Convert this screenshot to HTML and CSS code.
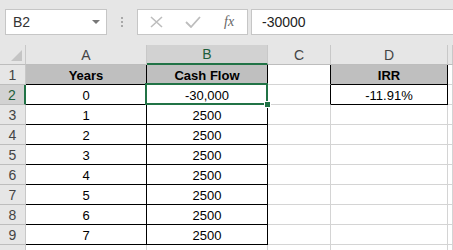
FILE: index.html
```html
<!DOCTYPE html>
<html lang="en">
<head>
    <meta charset="UTF-8">
    <title>IRR sheet</title>
    <link rel="stylesheet" href="styles.css">
</head>
<body>
    <div class="formula-bar">
        <div class="name-box">
            <span>B2</span>
            <span class="drop"></span>
        </div>
        <div class="dots"><i></i><i></i><i></i></div>
        <div class="fx-box">
            <svg class="ico" width="13" height="12" viewBox="0 0 13 12"><path d="M1 1 L12 11 M12 1 L1 11" stroke="#bdbdbd" stroke-width="1.6" fill="none"/></svg>
            <svg class="ico" width="16" height="12" viewBox="0 0 16 12"><path d="M1 6 L6 11 L15 1" stroke="#bdbdbd" stroke-width="1.8" fill="none"/></svg>
            <span class="fx">fx</span>
        </div>
        <div class="input">-30000</div>
    </div>

    <div class="sheet-wrap">
    <div class="sheet">
        <div class="corner"></div>
        <div class="colhead">A</div>
        <div class="colhead sel">B</div>
        <div class="colhead">C</div>
        <div class="colhead">D</div>
        <div class="colhead"></div>

        <div class="rowhead">1</div>
        <div class="cell tbl head">Years</div>
        <div class="cell tbl head">Cash Flow</div>
        <div class="cell edge"></div>
        <div class="cell tbl head">IRR</div>
        <div class="cell"></div>

        <div class="rowhead sel">2</div>
        <div class="cell tbl">0</div>
        <div class="cell tbl active">-30,000<span class="pick"><b></b></span></div>
        <div class="cell edge"></div>
        <div class="cell tbl">-11.91%</div>
        <div class="cell"></div>

        <div class="rowhead">3</div>
        <div class="cell tbl">1</div>
        <div class="cell tbl">2500</div>
        <div class="cell"></div><div class="cell"></div><div class="cell"></div>

        <div class="rowhead">4</div>
        <div class="cell tbl">2</div>
        <div class="cell tbl">2500</div>
        <div class="cell"></div><div class="cell"></div><div class="cell"></div>

        <div class="rowhead">5</div>
        <div class="cell tbl">3</div>
        <div class="cell tbl">2500</div>
        <div class="cell"></div><div class="cell"></div><div class="cell"></div>

        <div class="rowhead">6</div>
        <div class="cell tbl">4</div>
        <div class="cell tbl">2500</div>
        <div class="cell"></div><div class="cell"></div><div class="cell"></div>

        <div class="rowhead">7</div>
        <div class="cell tbl">5</div>
        <div class="cell tbl">2500</div>
        <div class="cell"></div><div class="cell"></div><div class="cell"></div>

        <div class="rowhead">8</div>
        <div class="cell tbl">6</div>
        <div class="cell tbl">2500</div>
        <div class="cell"></div><div class="cell"></div><div class="cell"></div>

        <div class="rowhead">9</div>
        <div class="cell tbl">7</div>
        <div class="cell tbl">2500</div>
        <div class="cell"></div><div class="cell"></div><div class="cell"></div>

        <div class="rowhead"></div>
        <div class="cell"></div><div class="cell"></div>
        <div class="cell"></div><div class="cell"></div><div class="cell"></div>
    </div>
    </div>
</body>
</html>
```

FILE: styles.css
```css
body {
    margin: 0;
    background-color: #e6e6e6;
    font-family: "Liberation Sans", Arial, sans-serif;
    overflow: hidden;
}

/* formula bar */

.formula-bar {
    display: flex;
    align-items: flex-start;
    height: 45px;
    padding: 9px 0 0 5px;
    box-sizing: border-box;
}

.name-box {
    width: 102px;
    height: 26px;
    box-sizing: border-box;
    background: #fff;
    border: 1px solid #c6c6c6;
    display: flex;
    align-items: center;
    justify-content: space-between;
    padding: 0 6px 0 7px;
    font-size: 14px;
    color: #333;
}

.drop {
    width: 0;
    height: 0;
    border-left: 4px solid transparent;
    border-right: 4px solid transparent;
    border-top: 4px solid #777;
}

.dots {
    width: 30px;
    height: 26px;
    display: flex;
    flex-direction: column;
    align-items: center;
    justify-content: center;
    gap: 2px;
}

.dots i {
    width: 2px;
    height: 2px;
    background: #a8a8a8;
}

.fx-box {
    width: 111px;
    height: 26px;
    box-sizing: border-box;
    background: #fff;
    border: 1px solid #c6c6c6;
    display: flex;
    align-items: center;
    padding-left: 12px;
    gap: 22px;
}

.fx {
    font-family: "Liberation Serif", serif;
    font-style: italic;
    font-size: 14px;
    color: #666;
    margin-left: 1px;
}

.input {
    flex: 1;
    height: 26px;
    box-sizing: border-box;
    margin-left: 3px;
    margin-right: -2px;
    background: #fff;
    border: 1px solid #c6c6c6;
    padding-left: 10px;
    line-height: 24px;
    font-size: 14px;
    color: #222;
}

/* sheet */

.sheet-wrap {
    height: 205px;
    overflow: hidden;
}

.sheet {
    display: grid;
    grid-template-columns: 26px 121px 121px 63px 117px 1fr;
    grid-auto-rows: 20px;
    background: #fff;
    font-size: 13px;
    color: #000;
}

.corner,
.colhead,
.rowhead {
    background: #e6e6e6;
    color: #444;
    font-size: 14px;
    display: flex;
    align-items: center;
    justify-content: center;
    box-sizing: border-box;
    border-right: 1px solid #c8c8c8;
    border-bottom: 1px solid #bdbdbd;
}

.corner {
    position: relative;
}

.corner::after {
    content: "";
    position: absolute;
    right: 3px;
    bottom: 3px;
    border-left: 11px solid transparent;
    border-bottom: 11px solid #c4c4c4;
}

.colhead.sel {
    background: #d2d2d2;
    color: #1e5e3a;
    border-bottom: 2px solid #217346;
}

.rowhead.sel {
    background: #d2d2d2;
    color: #1e5e3a;
    border-right: 2px solid #217346;
}

.rowhead {
    padding-top: 1px;
}

.cell {
    box-sizing: border-box;
    border-right: 1px solid #d4d4d4;
    border-bottom: 1px solid #d4d4d4;
    display: flex;
    align-items: center;
    justify-content: center;
    padding-top: 1px;
}

.cell.tbl {
    border-right-color: #000;
    border-bottom-color: #000;
}

.cell.head {
    background: #bfbfbf;
    font-weight: bold;
}

/* left edge of the IRR box */
.cell.edge {
    border-right-color: #000;
}

.active {
    position: relative;
}

.pick {
    position: absolute;
    left: -2px;
    top: -2px;
    right: -1px;
    bottom: -1px;
    border: 2px solid #217346;
}

.pick b {
    position: absolute;
    right: -5px;
    bottom: -5px;
    width: 5px;
    height: 5px;
    background: #217346;
    border: 1px solid #fff;
}
```
